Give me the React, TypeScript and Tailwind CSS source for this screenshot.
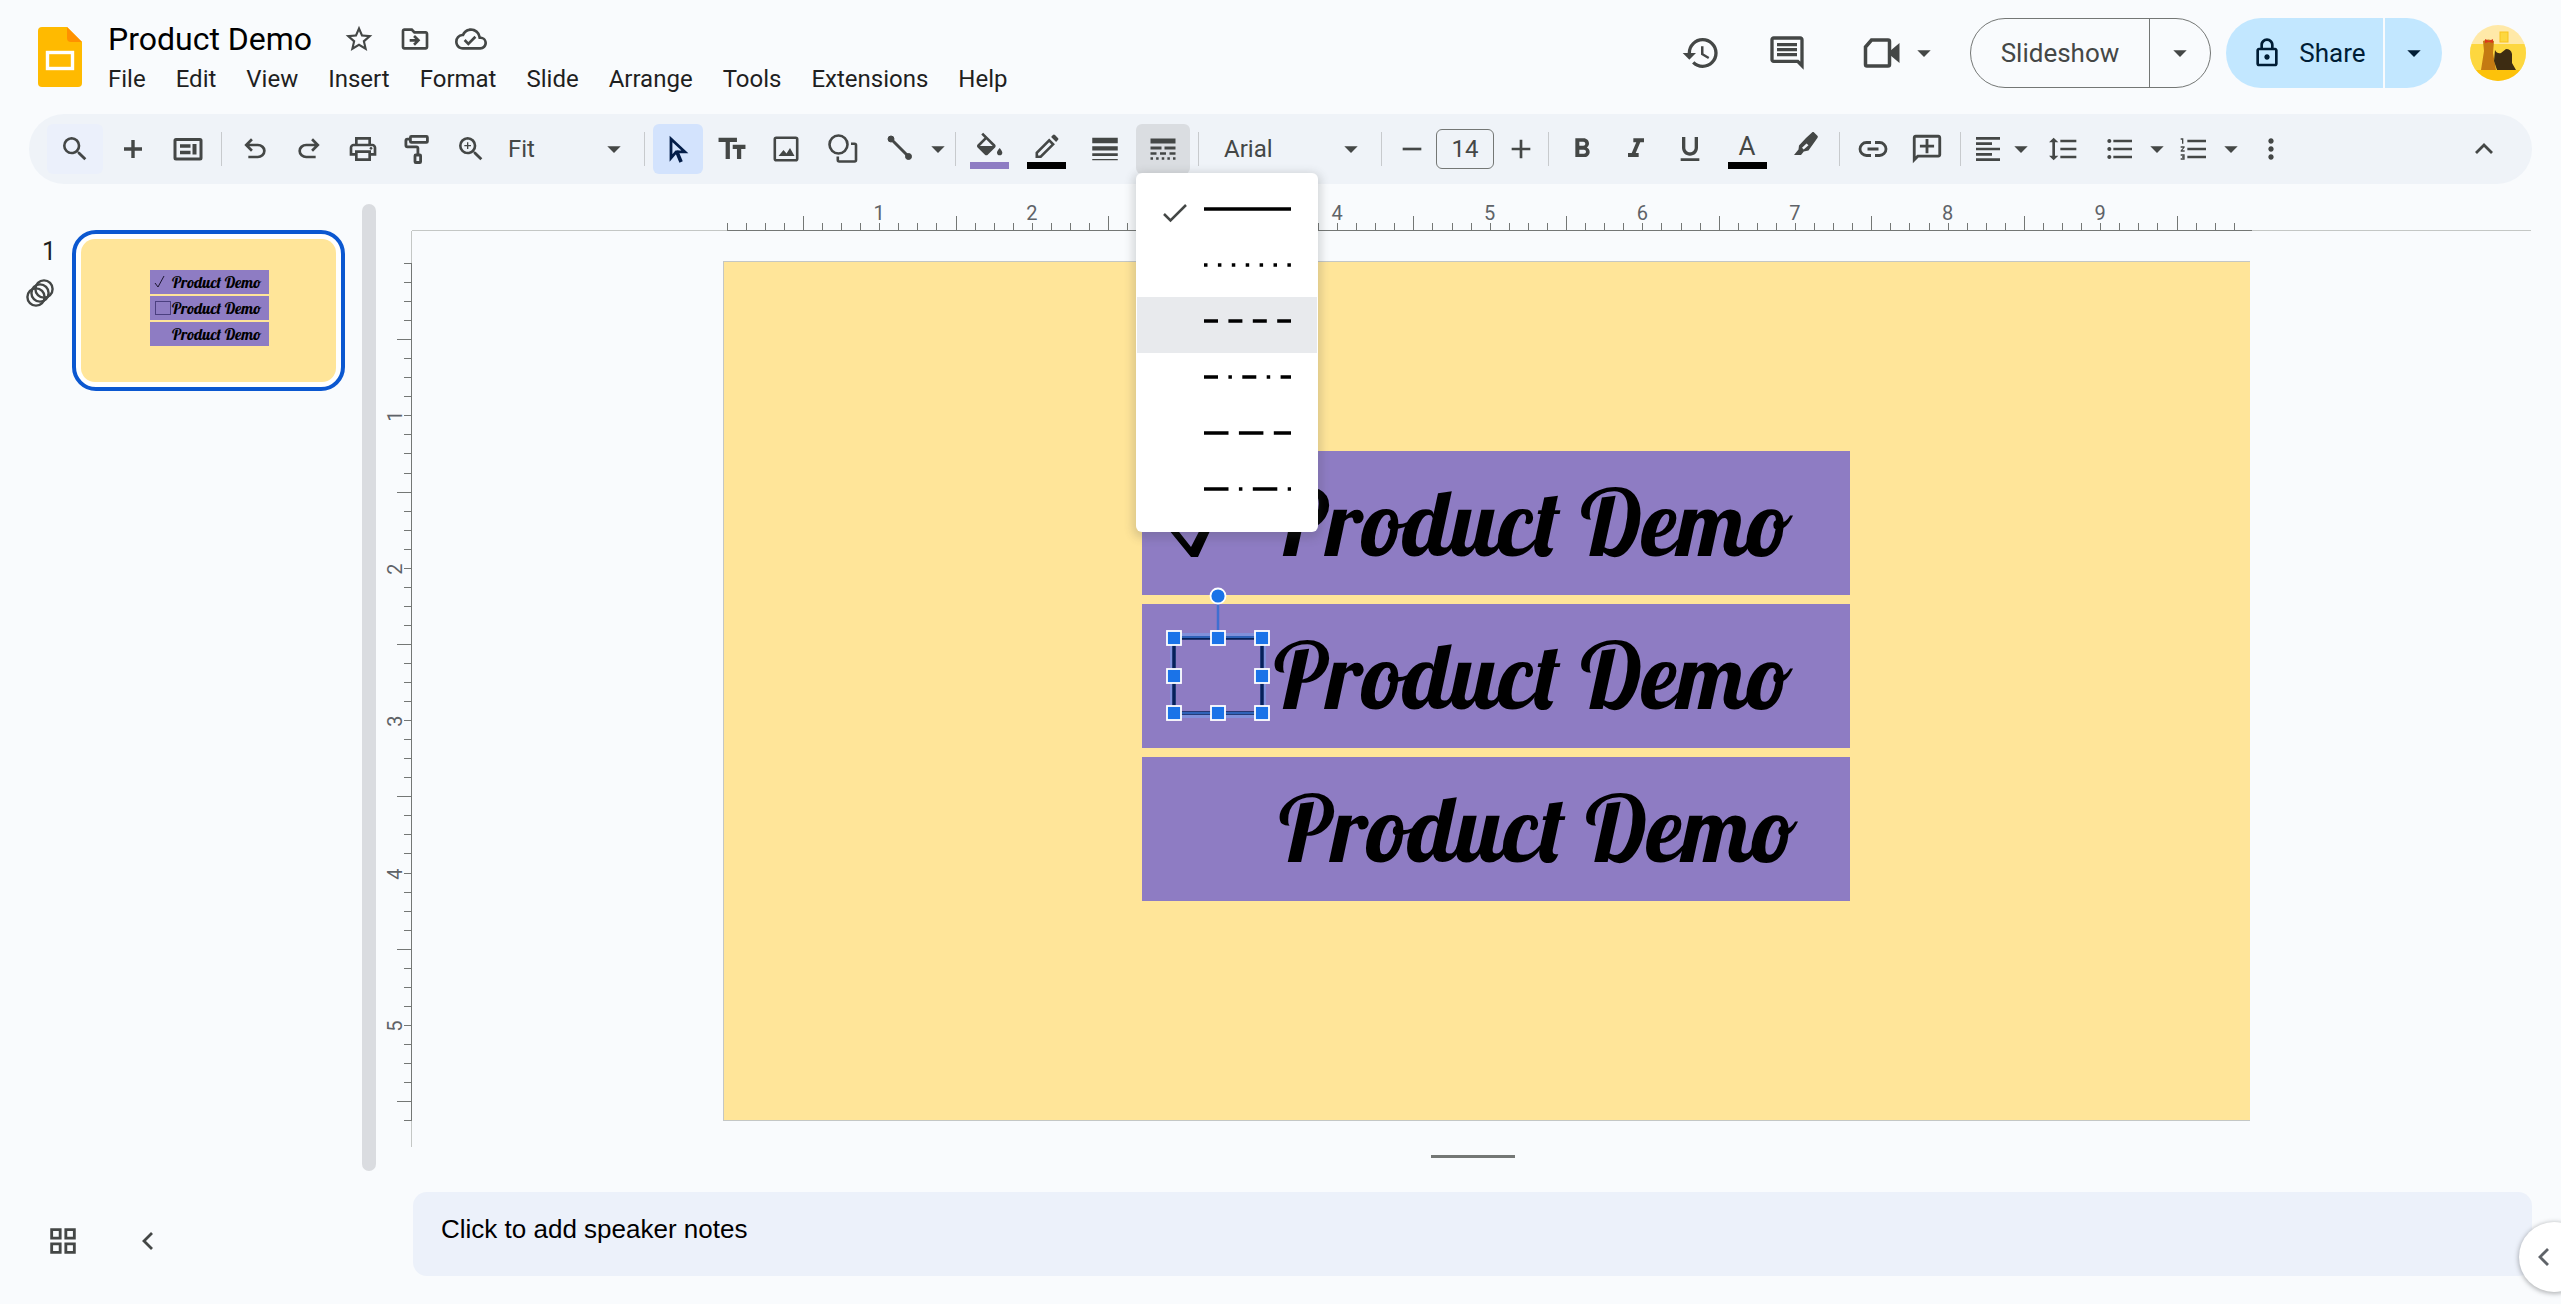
import { useState, type ReactNode } from 'react'
import clsx from 'clsx'
import {
  MdAdd,
  MdArrowDropDown,
  MdFormatAlignLeft,
  MdFormatBold,
  MdFormatItalic,
  MdFormatLineSpacing,
  MdFormatListBulleted,
  MdFormatListNumbered,
  MdFormatUnderlined,
  MdHistory,
  MdLineWeight,
  MdMoreVert,
  MdOutlineAddComment,
  MdOutlineCloudDone,
  MdOutlineComment,
  MdOutlineDriveFileMove,
  MdOutlineGridView,
  MdOutlineLock,
  MdOutlinePrint,
  MdRemove,
  MdSearch,
  MdStarBorder,
  MdTextFields,
  MdZoomIn,
} from 'react-icons/md'

const menus = ['File', 'Edit', 'View', 'Insert', 'Format', 'Slide', 'Arrange', 'Tools', 'Extensions', 'Help']

const dashStyles = [
  { name: 'Solid', dash: undefined },
  { name: 'Dot', dash: '3.5 10.4' },
  { name: 'Dash', dash: '14 10.4' },
  { name: 'Dash dot', dash: '14 10.4 3.5 10.4' },
  { name: 'Long dash', dash: '24.5 10.4' },
  { name: 'Long dash dot', dash: '24.5 10.4 3.5 10.4' },
]

/* ---------- icons ---------- */

const UndoIcon = ({ className }: { className?: string }) => (
  <svg viewBox="0 -960 960 960" className={clsx('size-8', className)} fill="currentColor">
    <path d="M280-200v-80h284q63 0 109.5-40T720-420q0-60-46.5-100T564-560H312l104 104-56 56-200-200 200-200 56 56-104 104h252q97 0 169.5 63T800-420q0 94-72.5 157T564-200H280Z" />
  </svg>
)

const PlusIcon = () => (
  <svg viewBox="0 0 32 32" className="size-8" fill="none" stroke="currentColor" strokeWidth="3.4">
    <path d="M16 7v18M7 16h18" />
  </svg>
)

const LayoutIcon = () => (
  <svg viewBox="0 0 32 32" className="size-8" fill="none" stroke="currentColor">
    <rect x="3" y="6.5" width="26" height="19.5" rx="1" strokeWidth="3" />
    <path d="M8 13h10.5M8 19.5h10.5" strokeWidth="3.5" />
    <path d="M22.5 11v10.5" strokeWidth="4" />
  </svg>
)

const PaintIcon = () => (
  <svg viewBox="0 0 32 32" className="size-8" fill="none" stroke="currentColor" strokeWidth="2.8">
    <rect x="9.4" y="3.4" width="17" height="6" rx="1" />
    <path d="M9.5 6.2H6.4a1.5 1.5 0 0 0-1.5 1.5v4.600a1.5 1.5 0 0 0 1.5 1.5h9a1.5 1.5 0 0 1 1.5 1.5V22" />
    <rect x="14" y="22" width="5.6" height="7.5" rx="0.8" />
  </svg>
)

const PointerIcon = () => (
  <svg viewBox="0 0 32 32" className="size-8" fill="none" stroke="currentColor" strokeWidth="2.8">
    <path d="M9 6v19l5.2-6.2h8.600L9 6Z" />
    <path d="m14.5 18 4.600 11" strokeWidth="3.6" />
  </svg>
)

const ImageIcon = () => (
  <svg viewBox="0 0 32 32" className="size-8" fill="none" stroke="currentColor">
    <rect x="4.8" y="4.8" width="22.4" height="22.4" rx="1.5" strokeWidth="2.6" />
    <path d="m8.5 23 5-6 3 3.500 3.500-5.500 4.500 8Z" fill="currentColor" stroke="none" />
  </svg>
)

const ShapeIcon = () => (
  <svg viewBox="0 0 32 32" className="size-8" fill="none" stroke="currentColor" strokeWidth="2.6">
    <circle cx="11.5" cy="11.5" r="9" />
    <path d="M24 10.800h3.500a1.500 1.500 0 0 1 1.500 1.500V27a1.500 1.500 0 0 1-1.500 1.500H12.300a1.500 1.500 0 0 1-1.500-1.500v-3.500" />
  </svg>
)

const LineIcon = () => (
  <svg viewBox="0 0 32 32" className="size-8" fill="currentColor" stroke="currentColor">
    <path d="m7 6 17.500 17.500" strokeWidth="3" />
    <circle cx="7" cy="6" r="3" />
    <circle cx="24.5" cy="23.5" r="3" />
  </svg>
)

const FillIcon = () => (
  <svg viewBox="0 -2 24 24" className="size-8" fill="currentColor">
    <path d="M16.560 8.940 7.620 0 6.210 1.410l2.380 2.380-5.150 5.150c-.59.59-.59 1.540 0 2.120l5.500 5.500c.29.29.68.44 1.060.44s.77-.15 1.060-.44l5.500-5.500c.59-.58.59-1.530 0-2.120ZM5.210 10 10 5.210 14.790 10H5.210ZM20 11.500s-2 2.170-2 3.500c0 1.100.9 2 2 2s2-.9 2-2c0-1.330-2-3.500-2-3.500Z" />
  </svg>
)

const PenIcon = () => (
  <svg viewBox="0 0 32 32" className="size-8" fill="none" stroke="currentColor" strokeWidth="2.6">
    <path d="M6.800 26.700v-3.900L19.200 10.400l3.900 3.900L10.700 26.700Z" />
    <path d="m21.100 6.900 1.800-1.800c.7-.7 1.400-.7 2.100 0l2.900 2.900c.7.7.7 1.400 0 2.100l-1.800 1.800Z" fill="currentColor" stroke="none" />
  </svg>
)

const HighlighterIcon = () => (
  <svg viewBox="0 0 32 32" className="size-8" fill="currentColor">
    <path
      fillRule="evenodd"
      d="m17 8 6-5.500c.7-.6 1.500-.6 2.100 0l3.300 3.300c.6.7.6 1.400 0 2.100L19.500 20.500l-4.700 1L12 25H5l4.500-5.500.5-4Zm.5 5.500L13 17.800l1.700 1.600 4.800-4.200Z"
    />
  </svg>
)

const DashIcon = () => (
  <svg viewBox="0 0 32 32" className="size-8" fill="none" stroke="currentColor">
    <path d="M3.500 8h25" strokeWidth="5" />
    <path d="M3.500 15h11M17.500 15h11" strokeWidth="3" />
    <path d="M3.500 20.500h6M13 20.500h6M22.500 20.500h6" strokeWidth="2.6" />
    <path d="M3.500 25.500h25" strokeWidth="2.6" strokeDasharray="2.5 3.125" />
  </svg>
)

const LinkIcon = () => (
  <svg viewBox="0 0 32 32" className="size-8" fill="none" stroke="currentColor" strokeWidth="2.8">
    <path d="M14 9.500H9.500a6.500 6.500 0 0 0 0 13H14M18 9.500h4.500a6.500 6.500 0 0 1 0 13H18M10.500 16h11" />
  </svg>
)

const MeetIcon = () => (
  <svg viewBox="0 0 40 40" className="size-10">
    <path d="M9.500 7H26a1.500 1.500 0 0 1 1.500 1.500v23A1.500 1.500 0 0 1 26 33H5a1.500 1.500 0 0 1-1.500-1.500V14Z" fill="none" stroke="currentColor" strokeWidth="3.5" />
    <path d="m28 18 9.500-8v20L28 22Z" fill="currentColor" />
  </svg>
)

const Chevron = ({ className }: { className?: string }) => (
  <svg viewBox="0 0 24 24" className={clsx('size-6', className)} fill="none" stroke="currentColor" strokeWidth="2.8">
    <path d="m16 4-8 8 8 8" />
  </svg>
)

const LogoIcon = () => (
  <svg viewBox="0 0 44 60" className="h-[60px] w-11">
    <path d="M4 0h25l15 15v41a4 4 0 0 1-4 4H4a4 4 0 0 1-4-4V4a4 4 0 0 1 4-4Z" fill="#ffba00" />
    <path d="M29 0v11a4 4 0 0 0 4 4h11Z" fill="#ff9100" />
    <rect x="9.5" y="25.5" width="25" height="16" fill="none" stroke="#fff" strokeWidth="3.4" />
  </svg>
)

const Avatar = () => (
  <svg viewBox="0 0 56 56" className="size-14 rounded-full">
    <rect width="56" height="56" fill="#ffe9a8" />
    <rect y="19" width="56" height="26" fill="#fdd73f" />
    <rect y="45" width="56" height="11" fill="#fdc20a" />
    <rect x="30" y="7" width="8" height="10" fill="#fdd73f" stroke="#f9c31c" />
    <path d="M13 16q5-3 11 0l-1 12 3 17H11l3-19Z" fill="#c47a12" />
    <path d="m15 14 4 2 4-2v4l-4-1-4 1Z" fill="#dc3a1c" />
    <path d="M25 25q2 4 6 3l5-4q5 0 6 5v9l4 7H27l-3-9Z" fill="#3d2c12" />
  </svg>
)

const LayersIcon = () => (
  <svg viewBox="0 0 28 28" className="size-7" fill="none" stroke="currentColor" strokeWidth="2.4">
    <circle cx="10" cy="18" r="8.6" />
    <circle cx="14" cy="14" r="8.6" />
    <circle cx="18" cy="10" r="8.6" />
  </svg>
)

/* ---------- toolbar parts ---------- */

function Tool({ label, width = 'w-[50px]', active, children }: { label: string; width?: string; active?: string; children: ReactNode }) {
  return (
    <button
      type="button"
      aria-label={label}
      className={clsx('mx-0.5 flex h-[50px] shrink-0 flex-col items-center justify-center rounded-md', width, active)}
    >
      {children}
    </button>
  )
}

function Caret({ label, width = 'w-5' }: { label: string; width?: string }) {
  return (
    <button type="button" aria-label={label} className={clsx('flex h-[50px] shrink-0 items-center justify-center', width)}>
      <MdArrowDropDown className="size-8 shrink-0" />
    </button>
  )
}

const Divider = () => <div className="mx-1.5 h-[34px] w-px shrink-0 bg-[#c7cacd]" />

function ToolSelect({ label, options, width, pad }: { label: string; options: string[]; width: string; pad: string }) {
  return (
    <div className={clsx('relative flex h-[50px] shrink-0 items-center', width)}>
      <select aria-label={label} className={clsx('h-full w-full appearance-none bg-transparent text-2xl outline-none', pad)}>
        {options.map((o) => (
          <option key={o}>{o}</option>
        ))}
      </select>
      <MdArrowDropDown className="pointer-events-none absolute right-2 size-8" />
    </div>
  )
}

function DashMenu() {
  const [open, setOpen] = useState(true)
  const [selected, setSelected] = useState('Solid')

  return (
    <div className="relative mx-0.5 shrink-0">
      <button
        type="button"
        aria-label="Border dash"
        aria-expanded={open}
        onClick={() => setOpen(!open)}
        className="flex h-[50px] w-[54px] items-center justify-center rounded-md bg-[#dadde1]"
      >
        <DashIcon />
      </button>
      {open && (
        <div role="menu" className="absolute top-[49px] left-0 z-20 w-[182px] rounded-md bg-white px-px pt-3 pb-[11px] shadow-[0_3px_10px_3px_rgba(60,64,67,0.2)]">
          {dashStyles.map(({ name, dash }) => (
            <button
              key={name}
              type="button"
              role="menuitemradio"
              aria-label={name}
              aria-checked={selected === name}
              onClick={() => setSelected(name)}
              className={clsx('flex h-14 w-full pl-[26px] hover:bg-[#e8eaed]', name === 'Dash' && 'bg-[#e8eaed]')}
            >
              <span className="mt-4 w-[41px]">
                {selected === name && (
                  <svg viewBox="0 0 24 24" className="size-6" fill="none" stroke="currentColor" strokeWidth="2.5">
                    <path d="m1 13 6.500 6.500L23 4" />
                  </svg>
                )}
              </span>
              <svg className="mt-[22px] h-1 w-[87px]">
                <path d="M0 2h87" stroke="#000" strokeWidth="3.5" strokeDasharray={dash} />
              </svg>
            </button>
          ))}
        </div>
      )}
    </div>
  )
}

function Toolbar() {
  return (
    <div className="mr-[29px] ml-[29px] flex h-[70px] items-center rounded-full bg-[#eff3f8] pr-[21px] pl-4 text-[#444746]">
      <Tool label="Search the menus" width="w-[56px]" active="bg-[#ebf0fb]"><MdSearch className="size-8" /></Tool>
      <Tool label="New slide" width="w-[52px]"><PlusIcon /></Tool>
      <Tool label="Layout"><LayoutIcon /></Tool>
      <Divider />
      <Tool label="Undo"><UndoIcon /></Tool>
      <Tool label="Redo"><UndoIcon className="-scale-x-100" /></Tool>
      <Tool label="Print"><MdOutlinePrint className="size-8" /></Tool>
      <Tool label="Paint format"><PaintIcon /></Tool>
      <Tool label="Zoom"><MdZoomIn className="size-8" /></Tool>
      <ToolSelect label="Zoom level" options={['Fit', '50%', '100%', '200%']} width="w-[140px]" pad="pl-2.5" />
      <Divider />
      <Tool label="Select" active="bg-[#d3e3fd] text-[#041e49]"><PointerIcon /></Tool>
      <Tool label="Text box"><MdTextFields className="size-[34px]" /></Tool>
      <Tool label="Image"><ImageIcon /></Tool>
      <Tool label="Shape" width="w-[56px]"><ShapeIcon /></Tool>
      <Tool label="Line"><LineIcon /></Tool>
      <Caret label="Line options" width="w-[22px]" />
      <Divider />
      <Tool label="Fill color">
        <FillIcon />
        <span className="h-[7px] w-[39px] bg-[#8e7cc3]" />
      </Tool>
      <Tool label="Border color" width="w-[56px]">
        <PenIcon />
        <span className="h-[7px] w-[39px] bg-black" />
      </Tool>
      <Tool label="Border weight" width="w-[54px]"><MdLineWeight className="size-[34px]" /></Tool>
      <DashMenu />
      <Divider />
      <ToolSelect label="Font" options={['Arial', 'Lobster', 'Roboto']} width="w-[170px]" pad="pl-[19px]" />
      <Divider />
      <button type="button" aria-label="Decrease font size" className="flex w-12 shrink-0 justify-center">
        <MdRemove className="size-8" />
      </button>
      <input aria-label="Font size" defaultValue="14" className="mr-1.5 h-10 w-[58px] shrink-0 rounded-md border border-[#747775] bg-transparent text-center text-2xl" />
      <button type="button" aria-label="Increase font size" className="flex w-[42px] shrink-0 justify-center">
        <MdAdd className="size-8" />
      </button>
      <Divider />
      <Tool label="Bold"><MdFormatBold className="size-8" /></Tool>
      <Tool label="Italic"><MdFormatItalic className="size-8" /></Tool>
      <Tool label="Underline"><MdFormatUnderlined className="size-8" /></Tool>
      <Tool label="Text color" width="w-[56px]">
        <span className="h-8 text-[26px] leading-8">A</span>
        <span className="h-[7px] w-[39px] bg-black" />
      </Tool>
      <Tool label="Highlight color" width="w-[52px]">
        <HighlighterIcon />
        <span className="h-[7px]" />
      </Tool>
      <Divider />
      <Tool label="Insert link"><LinkIcon /></Tool>
      <Tool label="Add comment"><MdOutlineAddComment className="size-[34px] -scale-x-100" /></Tool>
      <Divider />
      <Tool label="Align" width="w-[38px]"><MdFormatAlignLeft className="size-8" /></Tool>
      <Caret label="Align options" width="w-6" />
      <Tool label="Line spacing" width="w-[56px]"><MdFormatLineSpacing className="size-8" /></Tool>
      <Tool label="Bulleted list"><MdFormatListBulleted className="size-8" /></Tool>
      <Caret label="Bulleted list options" />
      <Tool label="Numbered list"><MdFormatListNumbered className="size-8" /></Tool>
      <Caret label="Numbered list options" />
      <Tool label="More" width="w-[56px]"><MdMoreVert className="size-8" /></Tool>
      <div className="ml-auto">
        <Tool label="Hide the menus"><Chevron className="rotate-90" /></Tool>
      </div>
    </div>
  )
}

/* ---------- header ---------- */

function Header() {
  return (
    <header className="flex h-[114px] justify-between pr-[35px] pl-[38px]">
      <div className="flex gap-[26px]">
        <a href="#home" aria-label="Slides home" className="mt-[27px]"><LogoIcon /></a>
        <div className="pt-[19px]">
          <div className="flex h-10 items-center">
            <input aria-label="Document title" defaultValue="Product Demo" className="w-[235px] bg-transparent text-[32px] text-black outline-none" />
            <div className="flex gap-6 text-[#444746]">
              <button type="button" aria-label="Star"><MdStarBorder className="size-8" /></button>
              <button type="button" aria-label="Move"><MdOutlineDriveFileMove className="size-8" /></button>
              <button type="button" aria-label="Document status"><MdOutlineCloudDone className="size-8" /></button>
            </div>
          </div>
          <nav className="flex gap-[30px] pt-0.5 text-2xl leading-9 text-[#1f1f1f]">
            {menus.map((m) => (
              <button key={m} type="button">{m}</button>
            ))}
          </nav>
        </div>
      </div>

      <div className="flex h-[70px] items-center self-start pt-9 text-[#444746]">
        <button type="button" aria-label="Version history" className="mr-[46px]"><MdHistory className="size-10" /></button>
        <button type="button" aria-label="Comments" className="mr-[55px]"><MdOutlineComment className="size-10" /></button>
        <button type="button" aria-label="Join a call" className="mr-1"><MeetIcon /></button>
        <Caret label="Call options" width="w-9" />
        <div className="ml-7 flex h-[70px] shrink-0 rounded-full border border-[#747775]">
          <button type="button" className="w-[178px] text-[26px]">Slideshow</button>
          <button type="button" aria-label="Slideshow options" className="flex w-[61px] items-center justify-center border-l border-[#747775]">
            <MdArrowDropDown className="size-8" />
          </button>
        </div>
        <div className="ml-[15px] flex h-[70px] shrink-0 overflow-hidden rounded-full bg-[#c2e7ff] text-[#001d35]">
          <button type="button" className="flex w-[157px] items-center justify-center gap-4 pl-2 text-[26px]">
            <MdOutlineLock className="size-8" />
            Share
          </button>
          <button type="button" aria-label="Quick sharing" className="flex w-[59px] items-center justify-center border-l-2 border-[#f9fbfd]">
            <MdArrowDropDown className="size-8" />
          </button>
        </div>
        <button type="button" aria-label="Account" className="ml-7 shrink-0"><Avatar /></button>
      </div>
    </header>
  )
}

/* ---------- slide ---------- */

const handles = [
  [10, 52], [54, 52], [98, 52],
  [10, 90], [98, 90],
  [10, 127], [54, 127], [98, 127],
]

// selected square with its rotate handle
const Selection = () => (
  <svg viewBox="0 0 108 137" className="absolute -top-[18px] left-[22px] h-[137px] w-[108px]">
    <path d="M54 17v28" stroke="#3f6fd1" strokeWidth="2.5" />
    <rect x="9" y="50" width="90" height="79" fill="none" stroke="#8190db" strokeWidth="6" />
    <rect x="10" y="52" width="88" height="75" fill="none" stroke="#06215a" strokeWidth="3.5" />
    <path d="M10 51h88M10 127h88" stroke="#2f62b8" strokeWidth="2" />
    <circle cx="54" cy="10" r="7.5" fill="#1a73e8" stroke="#fff" strokeWidth="1.8" />
    {handles.map(([x, y]) => (
      <rect key={`${x}-${y}`} x={x - 7} y={y - 7} width="14" height="14" fill="#1a73e8" stroke="#fff" strokeWidth="1.8" />
    ))}
  </svg>
)

function Slide() {
  const bar = 'relative flex h-[144px] items-center bg-[#8e7cc3] pb-1'
  const text = "font-['Lobster','Liberation_Serif',serif] text-[93px] leading-none whitespace-nowrap text-black"
  return (
    <div className="relative mx-auto box-content aspect-video w-[71%] border-t border-b border-l border-[#c4c7c5] bg-[#ffe599]">
      <div className="absolute top-[189px] left-[418px] flex w-[708px] flex-col gap-[9px]">
        <div className={clsx(bar, 'pl-[132px]')}>
          <svg viewBox="0 0 80 80" className="absolute top-8 left-4 size-20" fill="#000">
            <path d="M2 36q4-4 8-1l23 29L66 0h8L40 74h-7Z" />
          </svg>
          <span className={text}>Product Demo</span>
        </div>
        <div className={clsx(bar, 'pl-[132px]')}>
          <span className={text}>Product Demo</span>
          <Selection />
        </div>
        <div className={clsx(bar, 'pl-[137px]')}>
          <span className={text}>Product Demo</span>
        </div>
      </div>
    </div>
  )
}

function Thumbnail() {
  const bar = 'relative flex h-6 items-center bg-[#8e7cc3] pl-[22px]'
  const text = "font-['Lobster','Liberation_Serif',serif] text-base leading-none whitespace-nowrap text-black"
  return (
    <button type="button" aria-label="Slide 1" className="h-[161px] w-[273px] rounded-3xl border-4 border-[#0b57d0] bg-white p-[5px]">
      <div className="flex h-full items-center justify-center rounded-[14px] bg-[#ffe599]">
        <div className="mb-1.5 ml-0.5 flex w-[119px] flex-col gap-0.5">
          <div className={bar}>
            <svg viewBox="0 0 12 12" className="absolute left-1 size-3" fill="none" stroke="#1b1530">
              <path d="m1 7 3 4L10 0" />
            </svg>
            <span className={text}>Product Demo</span>
          </div>
          <div className={bar}>
            <span className="absolute left-[5px] h-[14px] w-4 border border-[#4b3f80]" />
            <span className={text}>Product Demo</span>
          </div>
          <div className={bar}>
            <span className={text}>Product Demo</span>
          </div>
        </div>
      </div>
    </button>
  )
}

/* ---------- rulers ---------- */

const tick = 'bg-[#747775]'

function HorizontalRuler() {
  return (
    <div className="flex h-[47px]">
      <div className="w-[calc(14.5%+3px)] border-b border-[#c4c7c5]" />
      <div className="flex w-[71%] items-end border-b border-[#747775]">
        {Array.from({ length: 80 }, (_, i) => (
          <div key={i} className="relative flex-1">
            <div className={clsx('w-px', tick, i % 8 === 4 ? 'h-3.5' : 'h-[7px]')} />
            {i > 0 && i % 8 === 0 && (
              <span className="absolute bottom-[7px] -left-2.5 w-5 text-center text-xl leading-5 text-[#5f6368]">{i / 8}</span>
            )}
          </div>
        ))}
      </div>
      <div className="mr-[30px] flex-1 border-b border-[#c4c7c5]" />
    </div>
  )
}

function VerticalRuler() {
  return (
    <div className="flex w-9 flex-col">
      <div className="h-8 border-r border-[#c4c7c5]" />
      <div className="flex flex-1 flex-col items-stretch border-r border-[#747775]">
        {Array.from({ length: 45 }, (_, i) => (
          <div key={i} className="relative flex flex-1 justify-end">
            <div className={clsx('h-px', tick, i % 8 === 4 ? 'w-3.5' : 'w-[7px]')} />
            {i > 0 && i % 8 === 0 && (
              <span className="absolute -top-[9px] right-1.5 w-5 -rotate-90 text-center text-xl leading-5 text-[#5f6368]">{i / 8}</span>
            )}
          </div>
        ))}
        <div className={clsx('h-px w-[7px] self-end', tick)} />
      </div>
      <div className="h-[26px] border-r border-[#c4c7c5]" />
    </div>
  )
}

function Filmstrip() {
  return (
    <aside className="flex w-[376px] shrink-0 flex-col text-[#444746]">
      <div className="flex flex-1 justify-between pt-5">
        <div className="flex items-start pt-[26px] pl-[26px]">
          <div className="flex w-[46px] flex-col gap-2.5 pt-[5px]">
            <span className="w-[30px] text-right text-[25px] leading-[34px] text-[#1f1f1f]">1</span>
            <LayersIcon />
          </div>
          <Thumbnail />
        </div>
        <div className="w-3.5 rounded-full bg-[#dadce0]" />
      </div>
      <div className="flex h-[133px] items-center gap-14 pt-1.5 pl-[46px]">
        <button type="button" aria-label="Grid view"><MdOutlineGridView className="size-[34px]" /></button>
        <button type="button" aria-label="Hide filmstrip"><Chevron /></button>
      </div>
    </aside>
  )
}

export default function App() {
  return (
    <div className="min-h-screen bg-white font-['Google_Sans','Roboto',sans-serif]">
      <div className="relative flex min-h-[calc(100vh-2px)] flex-col overflow-hidden bg-[#f9fbfd]">
        <Header />
        <Toolbar />
        <main className="flex flex-1">
          <Filmstrip />
          <section className="min-w-0 flex-1">
            <div className="pl-9">
              <HorizontalRuler />
            </div>
            <div className="flex">
              <VerticalRuler />
              <div className="min-w-0 flex-1 pt-[30px] pb-[26px]">
                <Slide />
              </div>
            </div>
            <div className="mr-[29px] ml-[37px]">
              <div className="mx-auto mt-2 h-[3px] w-[84px] bg-[#747775]" />
              <textarea
                aria-label="Speaker notes"
                defaultValue="Click to add speaker notes"
                className="mt-[34px] block h-[84px] w-full resize-none rounded-[14px] bg-[#ecf1fa] px-7 py-[19px] font-['Arial','Liberation_Sans',sans-serif] text-[26px] leading-9 text-black outline-none"
              />
            </div>
          </section>
        </main>
        <button
          type="button"
          aria-label="Show side panel"
          className="absolute -right-7 bottom-3 flex size-[70px] items-center rounded-full bg-white pl-[13px] text-[#5f6368] shadow-[0_1px_4px_1px_rgba(60,64,67,0.35)]"
        >
          <Chevron />
        </button>
      </div>
    </div>
  )
}
